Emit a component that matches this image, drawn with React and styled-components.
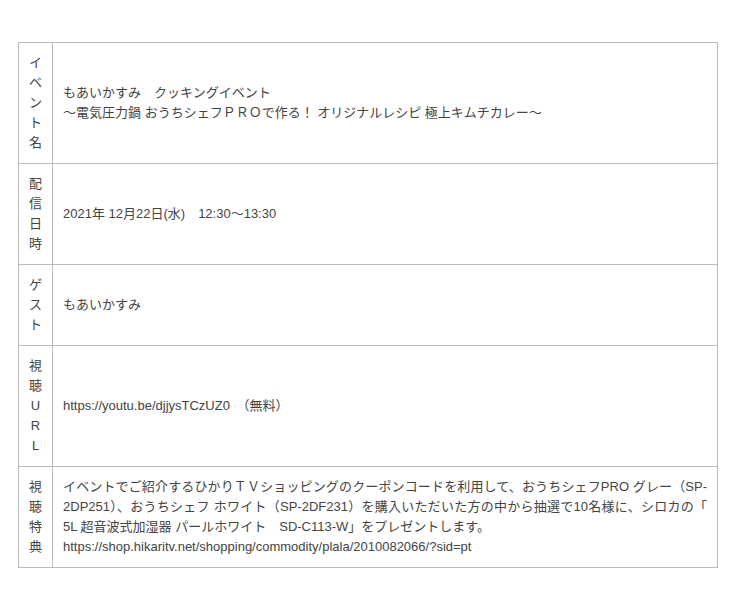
import styled, { createGlobalStyle } from "styled-components";

const GlobalStyle = createGlobalStyle`
  html, body {
    margin: 0;
    padding: 0;
    background: #fff;
  }
`;

const Page = styled.div`
  padding: 42px 22px 40px 18px;
  font-family: "Liberation Sans", "Noto Sans CJK JP", sans-serif;
  font-size: 13px;
  line-height: 20px;
  color: #444;
`;

const Table = styled.table`
  width: 700px;
  border-collapse: collapse;
  border: 1px solid #bbb;
`;

const Label = styled.th`
  width: 13px;
  padding: 10px;
  border: 1px solid #bbb;
  font-weight: 400;
  text-align: center;
  vertical-align: middle;
  word-break: break-all;
`;

const Cell = styled.td`
  padding: 10px;
  border: 1px solid #bbb;
  vertical-align: middle;
  text-align: ${(props) => (props.justify ? "justify" : "left")};
`;

const rows = [
  {
    label: "イベント名",
    body: (
      <>
        もあいかすみ　クッキングイベント
        <br />
        〜電気圧力鍋 おうちシェフＰＲＯで作る！ オリジナルレシピ 極上キムチカレー〜
      </>
    ),
  },
  { label: "配信日時", body: "2021年 12月22日(水)　12:30〜13:30" },
  { label: "ゲスト", body: "もあいかすみ" },
  { label: "視聴URL", body: "https://youtu.be/djjysTCzUZ0　（無料）" },
  {
    label: "視聴特典",
    justify: true,
    body: (
      <>
        イベントでご紹介するひかりＴＶショッピングのクーポンコードを利用して、おうちシェフPRO グレー（SP-2DP251）、おうちシェフ ホワイト（SP-2DF231）を購入いただいた方の中から抽選で10名様に、シロカの「<wbr />5L 超音波式加湿器 パールホワイト　SD-C113-W」をプレゼントします。
        <br />
        https://shop.hikaritv.net/shopping/commodity/plala/2010082066/?sid=pt
      </>
    ),
  },
];

export default function App() {
  return (
    <>
      <GlobalStyle />
      <Page>
        <Table>
          <tbody>
            {rows.map((row) => (
              <tr key={row.label}>
                <Label>{row.label}</Label>
                <Cell justify={row.justify}>{row.body}</Cell>
              </tr>
            ))}
          </tbody>
        </Table>
      </Page>
    </>
  );
}
